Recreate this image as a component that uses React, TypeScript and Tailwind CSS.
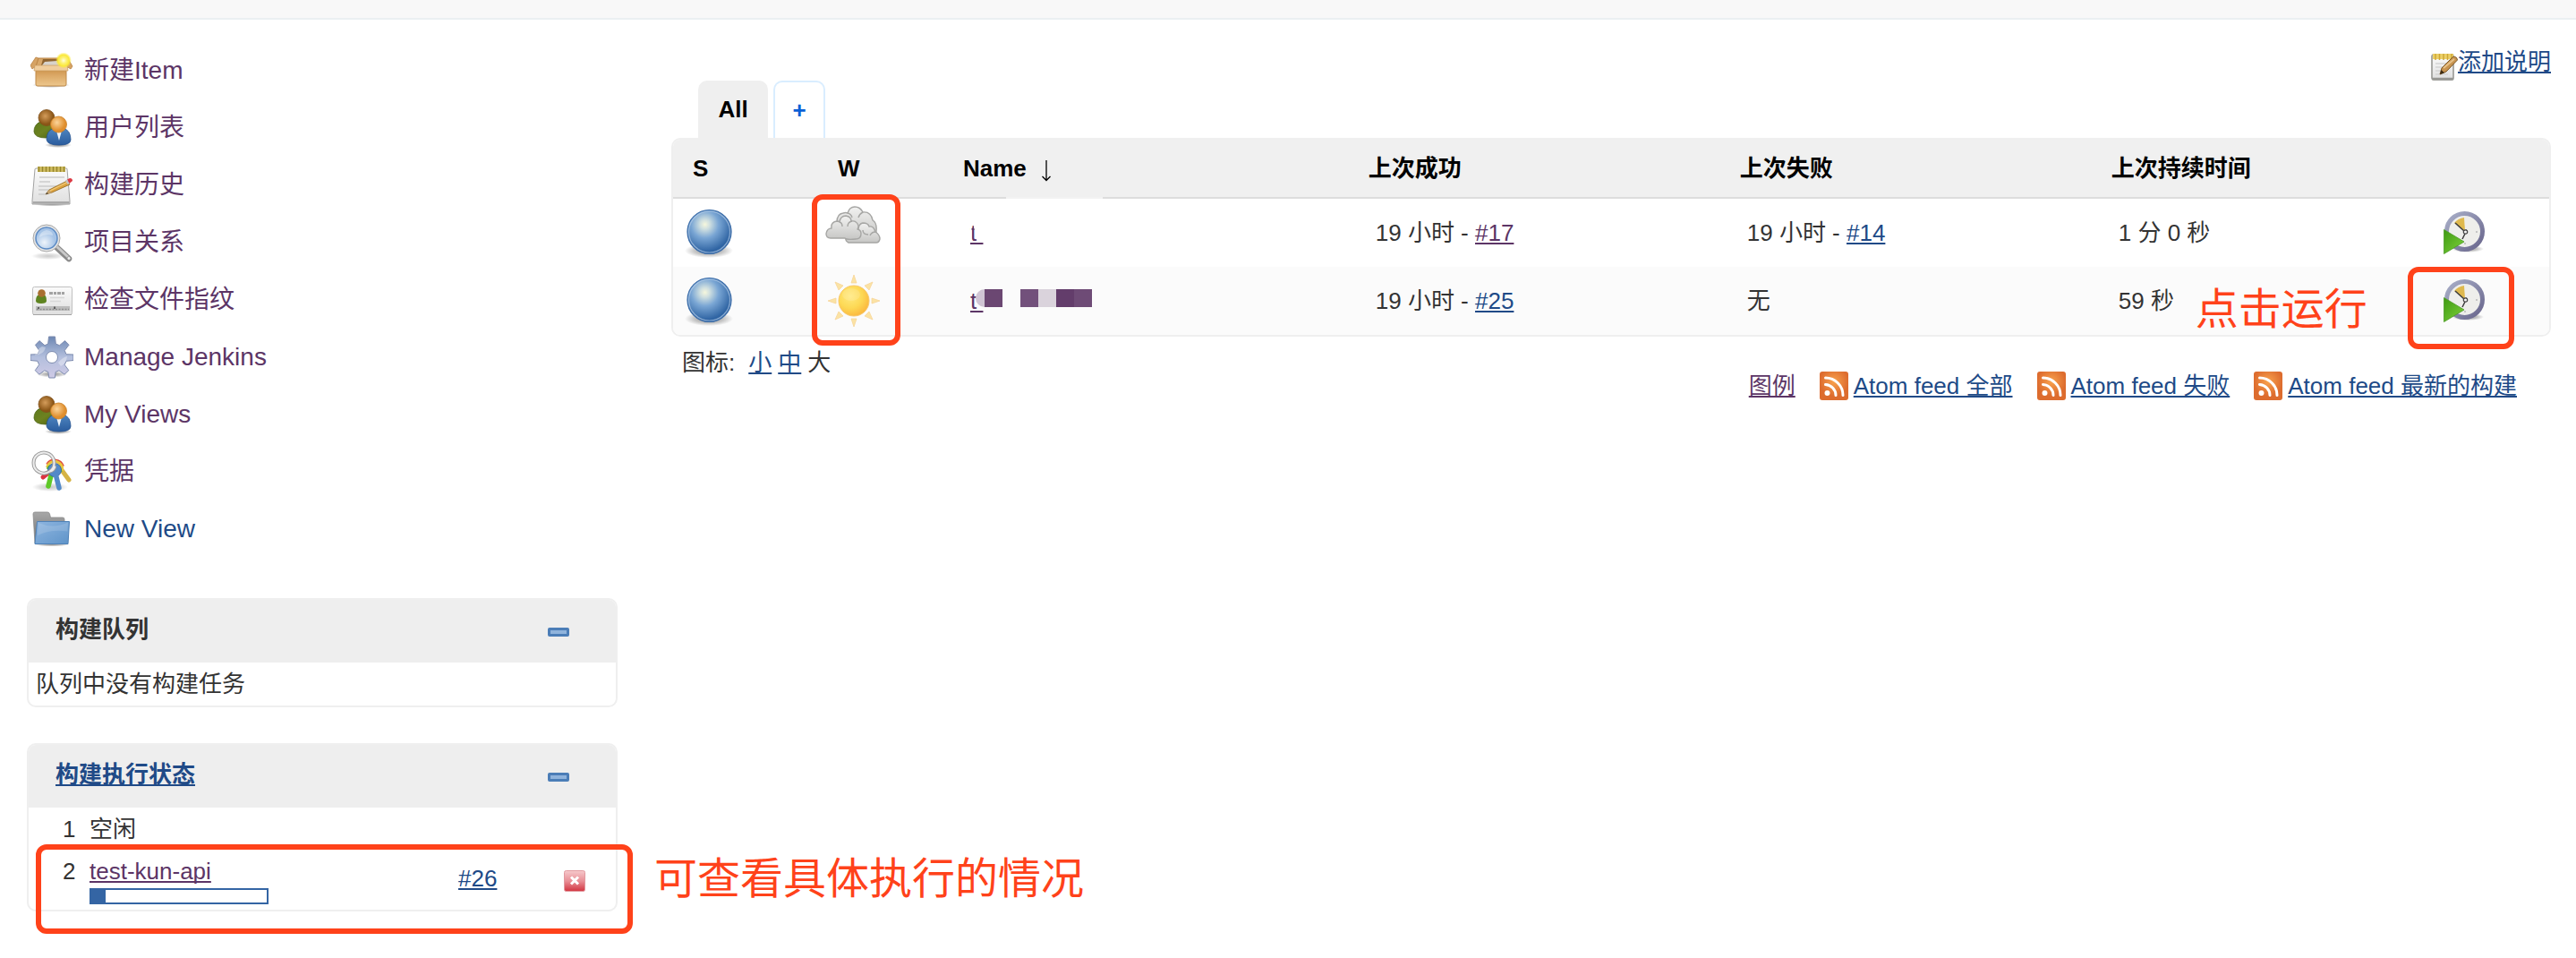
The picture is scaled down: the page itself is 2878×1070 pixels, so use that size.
import type { ReactNode } from "react";

const FONT =
  "font-['Liberation_Sans','Noto_Sans_CJK_SC',sans-serif]";

/* ---------- shared gradients ---------- */

function Gradients() {
  return (
    <svg width="0" height="0" className="absolute" aria-hidden="true">
      <defs>
        <linearGradient id="boxFront" x1="0" y1="0" x2="0" y2="1">
          <stop offset="0" stopColor="#c98f45" />
          <stop offset="0.35" stopColor="#d9a562" />
          <stop offset="1" stopColor="#edc78d" />
        </linearGradient>
        <radialGradient id="glow">
          <stop offset="0" stopColor="#fffde0" />
          <stop offset="0.35" stopColor="#fdf27a" />
          <stop offset="0.7" stopColor="#fbe93a" />
          <stop offset="1" stopColor="#fbe93a" stopOpacity="0" />
        </radialGradient>
        <radialGradient id="headBack" cx="0.42" cy="0.4">
          <stop offset="0" stopColor="#d49c5a" />
          <stop offset="1" stopColor="#8a5516" />
        </radialGradient>
        <radialGradient id="headFront" cx="0.4" cy="0.38">
          <stop offset="0" stopColor="#fbd49a" />
          <stop offset="1" stopColor="#e08f2e" />
        </radialGradient>
        <linearGradient id="bodyBack" x1="0" y1="0" x2="1" y2="1">
          <stop offset="0" stopColor="#5c7a1c" />
          <stop offset="0.5" stopColor="#6d8220" />
          <stop offset="1" stopColor="#4c6210" />
        </linearGradient>
        <linearGradient id="bodyFront" x1="0" y1="0" x2="0" y2="1">
          <stop offset="0" stopColor="#4f86c0" />
          <stop offset="1" stopColor="#2a5c9e" />
        </linearGradient>
        <linearGradient id="paper" x1="0" y1="0" x2="0" y2="1">
          <stop offset="0" stopColor="#fbfbfb" />
          <stop offset="1" stopColor="#dfdfdf" />
        </linearGradient>
        <radialGradient id="lens" cx="0.4" cy="0.7">
          <stop offset="0" stopColor="#eef4fb" />
          <stop offset="1" stopColor="#a5c3e6" />
        </radialGradient>
        <linearGradient id="gear" x1="0" y1="0" x2="0" y2="1">
          <stop offset="0" stopColor="#6c87b3" />
          <stop offset="0.5" stopColor="#b3bfdd" />
          <stop offset="1" stopColor="#cfcae6" />
        </linearGradient>
        <linearGradient id="folder" x1="0" y1="0" x2="1" y2="1">
          <stop offset="0" stopColor="#8fb6e0" />
          <stop offset="1" stopColor="#5f94c9" />
        </linearGradient>
        <linearGradient id="folderBack" x1="0" y1="0" x2="0" y2="1">
          <stop offset="0" stopColor="#a8a8a8" />
          <stop offset="1" stopColor="#6d6d6d" />
        </linearGradient>
        <radialGradient id="ball" cx="0.4" cy="0.33" r="0.62">
          <stop offset="0" stopColor="#f6f7dd" />
          <stop offset="0.18" stopColor="#cfdfe0" />
          <stop offset="0.5" stopColor="#7aa6d4" />
          <stop offset="1" stopColor="#2f64a3" />
        </radialGradient>
        <radialGradient id="shadow">
          <stop offset="0" stopColor="#000" stopOpacity="0.45" />
          <stop offset="0.6" stopColor="#000" stopOpacity="0.22" />
          <stop offset="1" stopColor="#000" stopOpacity="0" />
        </radialGradient>
        <linearGradient id="cloud" x1="0" y1="0" x2="0" y2="1">
          <stop offset="0" stopColor="#f2f2f1" />
          <stop offset="1" stopColor="#c6c6c4" />
        </linearGradient>
        <radialGradient id="sun" cx="0.38" cy="0.35" r="0.7">
          <stop offset="0" stopColor="#ffe97e" />
          <stop offset="0.55" stopColor="#fdd955" />
          <stop offset="1" stopColor="#fbb53c" />
        </radialGradient>
        <linearGradient id="play" x1="0" y1="0" x2="1" y2="1">
          <stop offset="0" stopColor="#3f9a12" />
          <stop offset="1" stopColor="#7fd33c" />
        </linearGradient>
        <linearGradient id="clockRim" x1="0" y1="0" x2="1" y2="1">
          <stop offset="0" stopColor="#a9afc8" />
          <stop offset="1" stopColor="#68658c" />
        </linearGradient>
        <radialGradient id="rss" cx="0.5" cy="0.35">
          <stop offset="0" stopColor="#f8a24e" />
          <stop offset="1" stopColor="#dd6c2e" />
        </radialGradient>
        <linearGradient id="stop" x1="0" y1="0" x2="0" y2="1">
          <stop offset="0" stopColor="#f6c9cc" />
          <stop offset="0.5" stopColor="#e98f96" />
          <stop offset="1" stopColor="#d23440" />
        </linearGradient>
      </defs>
    </svg>
  );
}

/* ---------- icons ---------- */

function Icon48({ children }: { children: ReactNode }) {
  return (
    <svg viewBox="0 0 48 48" className="size-12 shrink-0" aria-hidden="true">
      {children}
    </svg>
  );
}

const BoxIcon = () => (
  <Icon48>
    <ellipse cx="23" cy="40" rx="21" ry="3" fill="url(#shadow)" />
    <path d="M9 10h28l4 11H5z" fill="#d9a86a" stroke="#b98243" />
    <path d="M14 11h20l2 7H12z" fill="#8f6530" />
    <path d="M16 14l14-1 3 5H13z" fill="#d8d3cb" />
    <path d="M9 10l-3-1-6 9 2 4 4-3z" fill="#d6a364" stroke="#b98243" strokeWidth="0.8" />
    <path d="M37 10l4-1 6 10-2 3-5-3z" fill="#d6a364" stroke="#b98243" strokeWidth="0.8" />
    <path d="M6 21h34v18q0 2-2 2H8q-2 0-2-2z" fill="url(#boxFront)" stroke="#c08a48" />
    <path d="M5 18h36l1 6H4z" fill="#f0cd9c" stroke="#c99c60" strokeWidth="0.7" />
    <circle cx="37" cy="12.5" r="9" fill="url(#glow)" />
  </Icon48>
);

const PeopleIcon = () => (
  <Icon48>
    <ellipse cx="31" cy="43" rx="15" ry="3" fill="url(#shadow)" />
    <path d="M4 28q0-8 7-11h11q7 4 7 11 0 7-12 7T4 28z" fill="url(#bodyBack)" stroke="#48600f" strokeWidth="0.8" />
    <circle cx="18" cy="12.500" r="9" fill="url(#headBack)" stroke="#80501a" strokeWidth="0.8" />
    <path d="M18 37q0-10 8-13h11q8 3 8 13 0 6-13 6t-14-6z" fill="url(#bodyFront)" stroke="#24528f" strokeWidth="0.8" />
    <path d="M29 27h6l-3 11z" fill="#eef3f8" />
    <circle cx="31.500" cy="20" r="9" fill="url(#headFront)" stroke="#c97d22" strokeWidth="0.8" />
  </Icon48>
);

const NotepadIcon = () => (
  <Icon48>
    <ellipse cx="24" cy="45" rx="20" ry="2.500" fill="url(#shadow)" />
    <path d="M5 6q0-1 2-1h33q1 0 1 1l3 35v4H2v-4z" fill="url(#paper)" stroke="#a3a3a3" />
    <path d="M2.500 42h41v2.500h-41z" fill="#a9a9a9" />
    <path d="M8 3h31v6H8z" fill="#d0bd62" />
    <path d="M9.500 3v6M13.500 3v6M17.500 3v6M21.500 3v6M25.500 3v6M29.500 3v6M33.500 3v6M37.500 3v6" stroke="#96872c" strokeWidth="1.500" />
    <path d="M10 15h28M10 20h12M9 25h20M9 29h14M9 34h8" stroke="#cbcbcb" strokeWidth="1.500" />
    <path d="M17 34l4-5 20-10 3 4-20 9z" fill="#dda33f" stroke="#8d6219" strokeWidth="0.8" />
    <path d="M21 30.500l20-10" stroke="#f5cf7d" strokeWidth="1.200" />
    <path d="M17 34l4-5 3 3z" fill="#c9a671" />
    <path d="M17 34l1.500-2 1.500 1.200z" fill="#333" />
    <path d="M41 17.500l3-1.500q3 0 3 3l-3.500 3z" fill="#dc3b45" />
    <path d="M39 18.500l2-1 2.500 4.500-2 1z" fill="#c5c5c5" />
  </Icon48>
);

const SearchIcon = () => (
  <Icon48>
    <ellipse cx="20" cy="39" rx="19" ry="4" fill="url(#shadow)" opacity="0.45" />
    <path d="M29 29l14 13" stroke="#8a8a8a" strokeWidth="6.500" strokeLinecap="round" />
    <path d="M29 28l13.500 12.500" stroke="#c9c9c9" strokeWidth="3" strokeLinecap="round" />
    <circle cx="43" cy="41.500" r="2" fill="#ededed" stroke="#8a8a8a" strokeWidth="0.7" />
    <circle cx="18" cy="19" r="15" fill="#e4e4e4" stroke="#a8a8a8" />
    <circle cx="18" cy="19" r="12" fill="url(#lens)" stroke="#5b8ac4" strokeWidth="1.500" />
    <path d="M10 18q1-7 8-8 7 1 7 6-8-3-15 2z" fill="#fff" opacity="0.35" />
  </Icon48>
);

const CardIcon = () => (
  <Icon48>
    <rect x="2.500" y="9.500" width="44" height="31" rx="2" fill="url(#paper)" stroke="#c0c0c0" />
    <path d="M3 40.500h43" stroke="#a5a5a5" />
    <path d="M6 25q0-6 4-7h5q3 1 3 7 0 3-6 3T6 25z" fill="#5e8420" />
    <circle cx="12.500" cy="16.500" r="4.300" fill="#a86f30" />
    <path d="M21 16.500h17" stroke="#a3a3a3" strokeWidth="3" strokeDasharray="4 1 3 1" />
    <path d="M22 21.500h16M22 25.500h12" stroke="#d8d8d8" strokeWidth="1.500" />
    <path d="M6 33.500h38" stroke="#bcbcbc" strokeWidth="5" />
    <path d="M7 34.500h36" stroke="#8f8f8f" strokeWidth="1.500" strokeDasharray="2 1.500" />
    <path d="M9 32v2M27 31.500v2.500" stroke="#444" strokeWidth="1.500" />
  </Icon48>
);

const GEAR_PATH =
  "M20.500 1h7l.8 8 4.200 1.800 6-5.200 4.500 4.700-4.800 6.200 1.800 4.200 8 .3v6.500l-8 .8-1.800 4.200 4.600 6.200-4.800 4.500-6-4.400-3.800 1.600-.9 6.600h-6.500l-1-6.600-4-1.600-6 4.400-4.500-4.500 4.400-6.300L8 28.300l-8-.8V21l8-.3 1.800-4.200-4.300-6.200 4.500-4.700 6 5.200L19.700 9z";

const GearIcon = () => (
  <Icon48>
    <ellipse cx="24" cy="43" rx="17" ry="3.500" fill="url(#shadow)" />
    <path
      d={`${GEAR_PATH}M24 17.500a6.500 6.500 0 1 0 0 13 6.500 6.500 0 1 0 0-13z`}
      fill="url(#gear)"
      fillRule="evenodd"
      stroke="#7d8bae"
      strokeWidth="1"
      strokeLinejoin="round"
    />
    <path d="M5 22q10-1 12-9l-4-1q-6 3-8 10zM31 30q5-6 10-7-1 8-7 11z" fill="#fff" opacity="0.35" />
  </Icon48>
);

const KeysIcon = () => (
  <Icon48>
    <ellipse cx="22" cy="41" rx="20" ry="5" fill="url(#shadow)" opacity="0.5" />
    <path d="M32 18l11 15" stroke="#d5b345" strokeWidth="5" strokeLinecap="round" />
    <path d="M26 20L14 30" stroke="#dd3340" strokeWidth="5" strokeLinecap="round" />
    <path d="M19 16a9.500 9.500 0 0 1 17 2" fill="none" stroke="#df4a3c" strokeWidth="4" />
    <path d="M18.500 19a8.500 8.500 0 0 1 17 4" fill="none" stroke="#eac63c" strokeWidth="3" />
    <path d="M19 21a8 8 0 0 1 15 3" fill="none" stroke="#62c02e" strokeWidth="3" />
    <path d="M23 28l-3 12" stroke="#5fc928" strokeWidth="5.500" strokeLinecap="round" />
    <circle cx="27" cy="22" r="7.500" fill="#5389c8" stroke="#35659f" strokeWidth="0.8" />
    <path d="M28 26l4 16" stroke="#5389c8" strokeWidth="5.500" strokeLinecap="round" />
    <path d="M3.500 14a11.500 11.500 0 1 1 18 9.500q5-1 6-6" fill="none" stroke="#9b9b9b" strokeWidth="4" />
    <path d="M21.500 23.500A11.500 11.500 0 0 1 3.500 14" fill="none" stroke="#9b9b9b" strokeWidth="4" />
    <path d="M3.500 14a11.500 11.500 0 1 1 18 9.500q5-1 6-6" fill="none" stroke="#ececec" strokeWidth="2" />
    <path d="M21.500 23.500A11.500 11.500 0 0 1 3.500 14" fill="none" stroke="#ececec" strokeWidth="2" />
  </Icon48>
);

const FolderIcon = () => (
  <Icon48>
    <ellipse cx="24" cy="41" rx="20" ry="2.500" fill="url(#shadow)" />
    <path d="M3 7q0-2 2-2h14q2 0 2.500 2l1 4H36q2 0 2 2v27H5z" fill="url(#folderBack)" stroke="#8b8b8b" strokeWidth="0.8" />
    <path d="M7.500 15.500h36L42 40.500H5z" fill="url(#folder)" stroke="#4f82b8" />
    <path d="M9 17q16 7 33-.5l-.6 10Q22 24 8 31z" fill="#fff" opacity="0.14" />
  </Icon48>
);

const BallIcon = () => (
  <svg viewBox="0 0 64 64" className="block size-16" role="img" aria-label="成功">
    <ellipse cx="32" cy="52" rx="27" ry="8" fill="url(#shadow)" />
    <circle cx="32.500" cy="31" r="24.500" fill="url(#ball)" stroke="#3b6ca8" strokeWidth="1.200" />
    <circle cx="32.500" cy="31" r="23" fill="none" stroke="#b9d0ea" strokeWidth="1.200" opacity="0.65" />
  </svg>
);

const CloudIcon = () => (
  <svg viewBox="0 0 64 64" className="block size-16" role="img" aria-label="多云">
    <g fill="url(#cloud)" stroke="#a6a6a4" strokeWidth="1.400" strokeLinejoin="round">
      <path d="M9 30q-1-8 4-10 0-9 7-10 3-1 5 0 2-7 8-7t9 6q9-1 11 9 5 3 4 12v7H12z" />
      <path d="M25 10q4 1 5 5M42 9q-4 2-5 6M13 20q3-1 5 1" fill="none" />
      <path d="M26 43q-4-2-3-6l14-8q0-7 5-8 6 0 7 4 5-1 7 6 5 3 5 8-1 4-4 4z" />
      <path d="M42 29q0 5 6 5M56 31q-4 0-6 4" fill="none" />
      <path d="M6 38q-5 0-5-5 1-6 6-6-1-7 6-8 2 0 3 1 1-7 7-7 6 1 6 6 6-1 8 5 0 3-1 4 4 1 4 5 0 6-6 6-10 1-12-1z" />
      <path d="M16 20q3 1 3 5M30 19q-5 1-5 6" fill="none" />
    </g>
  </svg>
);

const SunIcon = () => (
  <svg viewBox="0 0 64 64" className="block size-16" role="img" aria-label="晴">
    <g fill="#fbe3a4" stroke="#f7d69a" strokeWidth="0.8">
      <path d="M32 3l3 9h-6z" />
      <path d="M32 61l3-9h-6z" />
      <path d="M3 32l9 3v-6z" />
      <path d="M61 32l-9 3v-6z" />
      <path d="M11 11l9 4-5 5z" />
      <path d="M53 11l-9 4 5 5z" />
      <path d="M11 53l9-4-5-5z" />
      <path d="M53 53l-9-4 5-5z" />
    </g>
    <circle cx="32" cy="32" r="17" fill="url(#sun)" stroke="#f8c769" />
    <ellipse cx="29" cy="25" rx="10" ry="7" fill="#fff" opacity="0.14" />
  </svg>
);

const RunIcon = () => (
  <svg viewBox="0 0 48 48" className="block size-12" aria-hidden="true">
    <ellipse cx="27" cy="42" rx="18" ry="4" fill="url(#shadow)" />
    <circle cx="23.500" cy="22.500" r="20" fill="#eeeeeb" stroke="url(#clockRim)" strokeWidth="5" />
    <path d="M24 22L12 13q4-5 11-6z" fill="#dfb94e" />
    <path d="M13 13l10 9 3-1M24 25l-3 6" fill="none" stroke="#3c3c3c" strokeWidth="1.500" />
    <circle cx="24.500" cy="23" r="2.200" fill="#f5f5f5" stroke="#444" strokeWidth="1.200" />
    <circle cx="37" cy="23" r="1" fill="#b9b9b9" />
    <circle cx="24" cy="36" r="1" fill="#b9b9b9" />
    <path d="M0.500 20.500L23 34 0.500 47.500z" fill="url(#play)" stroke="#4b9a26" strokeWidth="0.8" />
  </svg>
);

const RssIcon = () => (
  <svg viewBox="0 0 32 32" className="size-8 shrink-0" aria-hidden="true">
    <rect width="32" height="32" rx="3" fill="url(#rss)" />
    <circle cx="8.500" cy="24" r="3" fill="#fff" />
    <path d="M6.500 14.500a12 12 0 0 1 11.500 12M6.500 7A19.500 19.500 0 0 1 26 26.500" fill="none" stroke="#fff" strokeWidth="3" strokeLinecap="round" />
  </svg>
);

const EditIcon = () => (
  <svg viewBox="0 0 30 32" className="h-8 w-[30px] shrink-0" aria-hidden="true">
    <rect x="1" y="3" width="24" height="28" rx="2" fill="url(#paper)" stroke="#a3a39f" strokeWidth="1.800" />
    <path d="M1 30h24" stroke="#989894" strokeWidth="2.500" />
    <path d="M5 13h16M5 17h9M5 21h7M5 25h14" stroke="#d3d3d3" strokeWidth="1.300" />
    <path d="M2 5h23" stroke="#ecd067" strokeWidth="6" />
    <path d="M5 2v7M9.500 2v7M14 2v7M18.500 2v7M23 2v7" stroke="#cda738" strokeWidth="1.500" />
    <path d="M10 25l2-7L24.500 5.500q4-1 5 3.500L17 22z" fill="#c89450" stroke="#7d5828" strokeWidth="1" />
    <path d="M14 18L26 8" stroke="#e7c28a" strokeWidth="1.800" />
    <path d="M10 25l1.500-5 3.500 3.500z" fill="#3a2a14" />
  </svg>
);

/* ---------- small building blocks ---------- */

const BLUE = "text-[#204a87]";
const PURPLE = "text-[#5c3566]";

function Link({ visited = false, children }: { visited?: boolean; children: ReactNode }) {
  return (
    <a
      href="#"
      className={`${visited ? PURPLE : BLUE} underline decoration-2 underline-offset-2 [text-decoration-skip-ink:none]`}
    >
      {children}
    </a>
  );
}

const tasks: { icon: () => ReactNode; label: string; fresh?: boolean }[] = [
  { icon: BoxIcon, label: "新建Item" },
  { icon: PeopleIcon, label: "用户列表" },
  { icon: NotepadIcon, label: "构建历史" },
  { icon: SearchIcon, label: "项目关系" },
  { icon: CardIcon, label: "检查文件指纹" },
  { icon: GearIcon, label: "Manage Jenkins" },
  { icon: PeopleIcon, label: "My Views" },
  { icon: KeysIcon, label: "凭据" },
  { icon: FolderIcon, label: "New View", fresh: true },
];

function Pane({ title, children }: { title: ReactNode; children: ReactNode }) {
  return (
    <section className="rounded-[10px] border-2 border-[#efefef]">
      <header className="flex h-[70px] items-center justify-between rounded-t-lg bg-[#eeeeee] pr-[52px] pl-[30px]">
        <h2 className="pb-1 font-bold">{title}</h2>
        <button type="button" aria-label="折叠" className="pt-3.5 pb-3">
          <span className="block h-2.5 w-6 rounded-[2px] border-3 border-[#4b7db7] bg-[#8fb3dc]" />
        </button>
      </header>
      {children}
    </section>
  );
}

function Sidebar() {
  return (
    <aside className="w-[660px] shrink-0">
      <ul className="text-[28px] leading-9">
        {tasks.map(({ icon: Glyph, label, fresh }) => (
          <li key={label}>
            <a href="#" className={`flex h-16 items-center gap-3 pl-1 ${fresh ? BLUE : PURPLE}`}>
              <Glyph />
              <span>{label}</span>
            </a>
          </li>
        ))}
      </ul>

      <div className="mt-[45px] flex flex-col gap-10">
        <Pane title="构建队列">
          <p className="px-2 py-[5px]">队列中没有构建任务</p>
        </Pane>

        <Pane title={<Link>构建执行状态</Link>}>
          <div className="flex h-12 items-center pl-[38px]">
            <span className="w-[30px]">1</span>
            <span>空闲</span>
          </div>
          <div className="relative flex h-[66px] items-start pt-1 pl-[38px]">
            <span className="w-[30px]">2</span>
            <div className="w-[412px]">
              <Link visited>test-kun-api</Link>
              <div className="h-[18px] w-[200px] border-2 border-[#3465a4]" role="progressbar" aria-valuenow={8}>
                <div className="h-full w-4 bg-[#3465a4]" />
              </div>
            </div>
            <div className="w-[118px] pt-2">
              <Link>#26</Link>
            </div>
            <button type="button" aria-label="终止" className="pt-[18px]">
              <svg viewBox="0 0 24 24" className="block size-6" aria-hidden="true">
                <rect x="0.500" y="0.500" width="23" height="23" rx="2" fill="url(#stop)" stroke="#e29aa0" />
                <path d="M8 7.500l8 8M16 7.500l-8 8" stroke="#fff" strokeWidth="3" />
              </svg>
            </button>
            <div className="pointer-events-none absolute -top-[7px] left-2 h-[100px] w-[667px] rounded-xl border-6 border-[#ff421a]" />
            <p className="absolute top-0.5 left-[699px] text-5xl leading-[60px] whitespace-nowrap text-[#ff421a]">
              可查看具体执行的情况
            </p>
          </div>
        </Pane>
      </div>
    </aside>
  );
}

function RunButton() {
  return (
    <button type="button" aria-label="运行" className="block">
      <RunIcon />
    </button>
  );
}

function JobTable() {
  return (
    <div className="rounded-[10px] border-2 border-[#efefef]">
      <table className="w-full table-fixed border-separate border-spacing-0 text-left">
        <thead className="font-bold text-black">
          <tr className="h-[66px] bg-[#f0f0f0] *:border-b-2 *:border-[#dddddd]">
            <th className="w-[162px] rounded-tl-lg pl-[22px]">S</th>
            <th className="w-[140px] pl-[22px]">W</th>
            <th className="relative w-[21.6%] pl-[22px]">
              Name
              <svg viewBox="0 0 12 26" className="ml-4 inline h-[26px] w-3" aria-hidden="true">
                <path d="M6 2v22M1.500 20l4.500 4.500 4.500-4.500" fill="none" stroke="#000" strokeWidth="1.300" />
              </svg>
              <span className="absolute -bottom-0.5 left-[70px] h-0.5 w-[108px] bg-[#f2f2f2]" />
            </th>
            <th className="w-[19.8%] pl-[22px]">上次成功</th>
            <th className="w-[19.8%] pl-[22px]">上次失败</th>
            <th className="pl-[22px]">上次持续时间</th>
            <th className="w-[138px] rounded-tr-lg" aria-label="运行" />
          </tr>
        </thead>
        <tbody>
          <tr className="h-[76px]">
            <td className="pl-2">
              <BallIcon />
            </td>
            <td className="relative pl-2">
              <CloudIcon />
              <div className="pointer-events-none absolute -top-[5px] -left-[7px] z-10 h-[169px] w-[99px] rounded-xl border-6 border-[#ff421a]" />
            </td>
            <td className="pl-[30px]">
              <span className="relative inline-block w-[13px]">
                <Link visited>t&nbsp;</Link>
                <svg viewBox="0 0 14 24" className="absolute top-1 left-0 h-6 w-3.5" aria-hidden="true">
                  <path d="M0 9v15h1.500V10zM2 0h12v23H7.500z" fill="#fff" />
                </svg>
              </span>
            </td>
            <td className="pl-[30px]">
              19 小时 - <Link visited>#17</Link>
            </td>
            <td className="pl-[30px]">
              19 小时 - <Link>#14</Link>
            </td>
            <td className="pl-[30px]">1 分 0 秒</td>
            <td className="pl-5">
              <RunButton />
            </td>
          </tr>
          <tr className="h-[76px] bg-[#fbfbfb]">
            <td className="rounded-bl-lg pl-2">
              <BallIcon />
            </td>
            <td className="pl-2">
              <SunIcon />
            </td>
            <td className="pl-[30px]">
              <span className="relative inline-block">
                <Link visited>t&nbsp;</Link>
                <span className="absolute top-1.5 left-1.5 flex h-5">
                  <span className="w-2.5 rounded-l-full bg-[#d0c5d4]" />
                  <span className="w-5 bg-[#6b4772]" />
                  <span className="w-5" />
                  <span className="w-5 bg-[#72507b]" />
                  <span className="w-5 bg-[#dad3dc]" />
                  <span className="w-5 bg-[#633d6b]" />
                  <span className="w-5 bg-[#6e4b76]" />
                </span>
              </span>
            </td>
            <td className="pl-[30px]">
              19 小时 - <Link>#25</Link>
            </td>
            <td className="pl-[30px]">无</td>
            <td className="relative pl-[30px]">
              59 秒
              <span className="absolute top-[18px] left-[116px] text-5xl leading-[60px] whitespace-nowrap text-[#ff421a]">
                点击运行
              </span>
            </td>
            <td className="relative rounded-br-lg pl-5">
              <RunButton />
              <div className="pointer-events-none absolute top-0 -left-5 h-[92px] w-[119px] rounded-xl border-6 border-[#ff421a]" />
            </td>
          </tr>
        </tbody>
      </table>
    </div>
  );
}

function Feed({ label }: { label: string }) {
  return (
    <span className="flex items-center gap-1.5">
      <RssIcon />
      <Link>{label}</Link>
    </span>
  );
}

function Main() {
  return (
    <main className="min-w-0 flex-1">
      <div className="flex h-[43px] items-end justify-end">
        <EditIcon />
        <span className="pb-0.5">
          <Link>添加说明</Link>
        </span>
      </div>

      <nav className="flex gap-1.5 pl-[30px] font-bold" aria-label="视图">
        <a href="#" className="flex h-16 w-[78px] items-center justify-center rounded-t-[10px] bg-[#efefef] text-black">
          All
        </a>
        <a
          href="#"
          aria-label="新建视图"
          className="flex h-16 w-[58px] items-center justify-center rounded-t-[10px] border-2 border-b-0 border-[#d9edff] text-[#0b5fd6]"
        >
          +
        </a>
      </nav>

      <JobTable />

      <div className="flex items-start justify-between pt-2.5">
        <p className="flex gap-[7px] pl-3">
          <span className="mr-2">图标:</span>
          <Link>小</Link>
          <Link>中</Link>
          <span>大</span>
        </p>
        <div className="flex items-center gap-[27px] pt-[26px] pr-[38px]">
          <Link visited>图例</Link>
          <Feed label="Atom feed 全部" />
          <Feed label="Atom feed 失败" />
          <Feed label="Atom feed 最新的构建" />
        </div>
      </div>
    </main>
  );
}

export default function App() {
  return (
    <div className={`${FONT} min-h-screen bg-white text-[26px] leading-[38px] text-[#333333]`}>
      <Gradients />
      <div className="h-[22px] border-b-2 border-[#ebf0f2] bg-[#f8f8f8]" />
      <div className="flex gap-[60px] pt-[25px] pr-7 pl-[30px]">
        <Sidebar />
        <Main />
      </div>
    </div>
  );
}
